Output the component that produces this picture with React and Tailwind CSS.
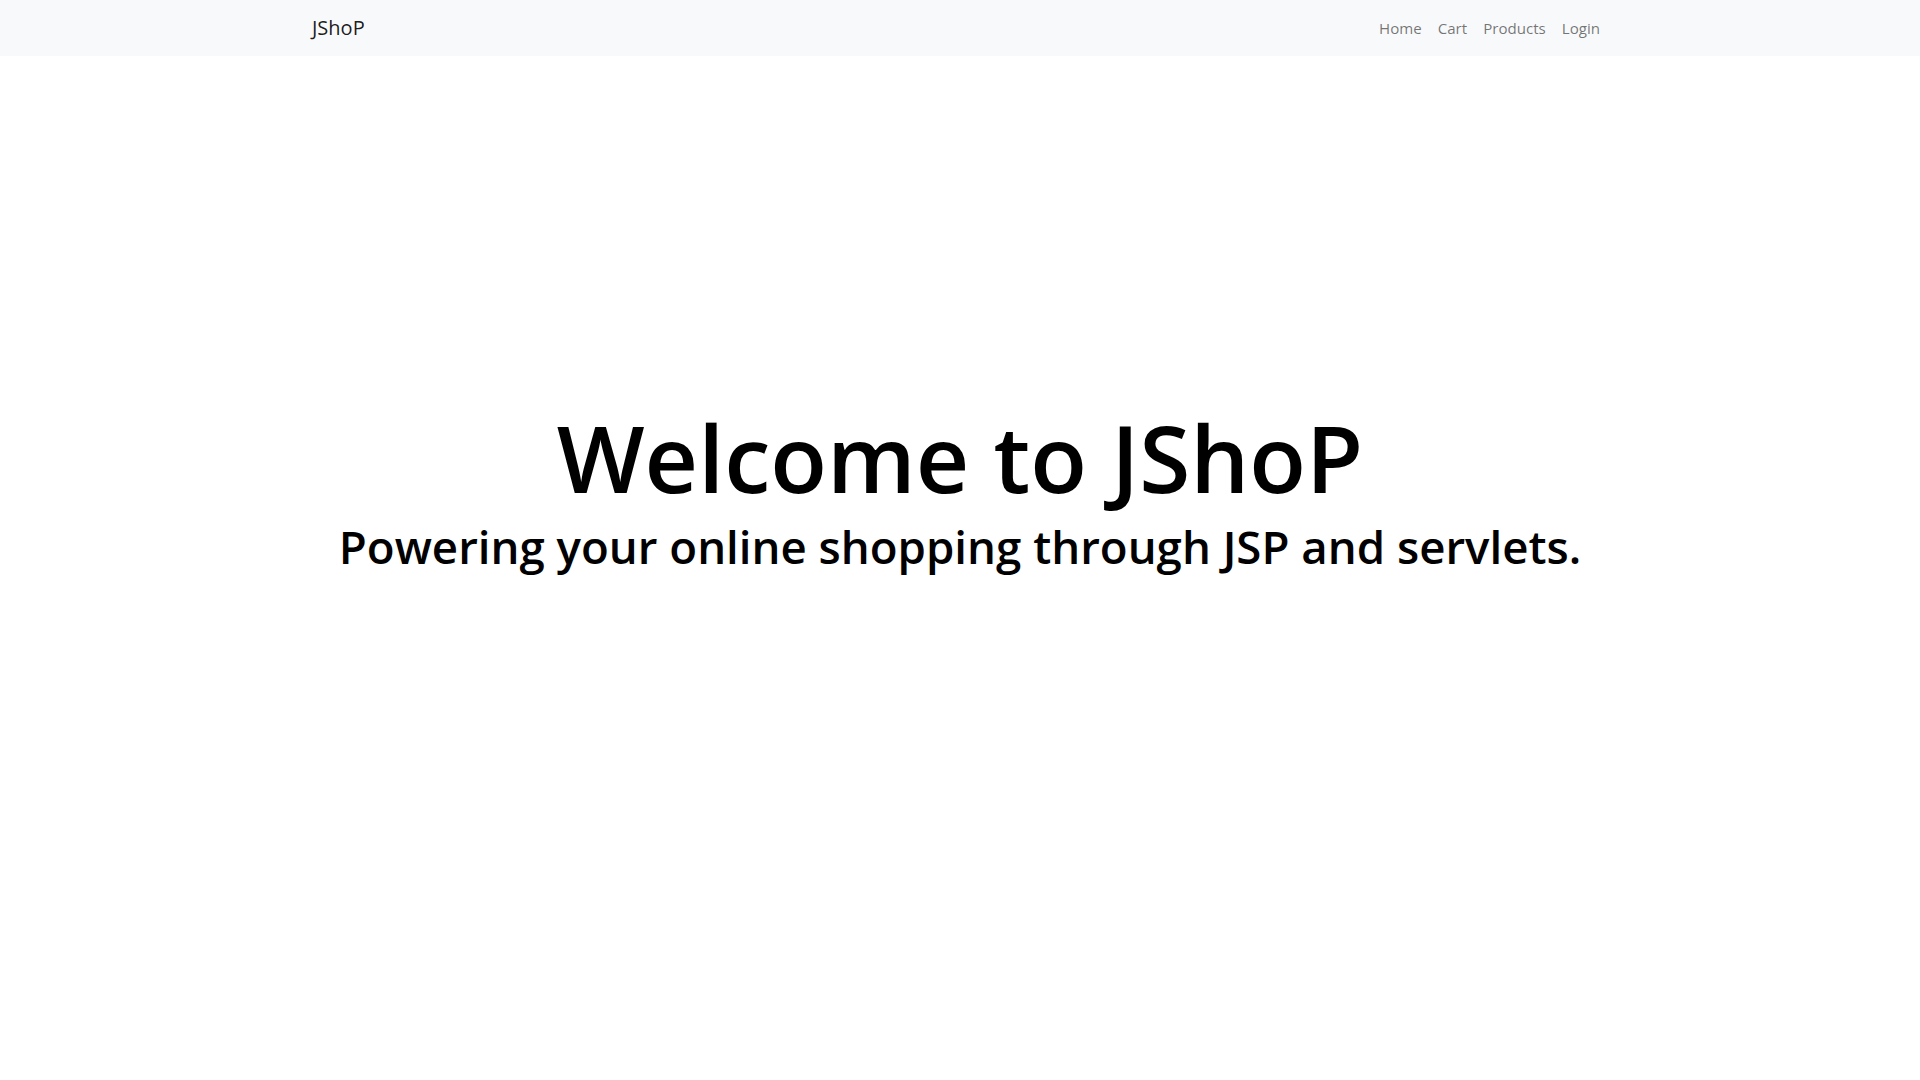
export default function App() {
  const links = ['Home', 'Cart', 'Products', 'Login'];
  return (
    <div className="min-h-screen bg-white font-['Open_Sans','Noto_Sans',sans-serif] text-black">
      <nav className="bg-[#f8f9fa] py-2">
        <div className="mx-auto flex w-[1320px] items-center justify-between px-3">
          <a className="py-[5px] text-[20px] leading-[30px] text-black/90" href="#">JShoP</a>
          <ul className="flex">
            {links.map(link => (
              <li key={link}>
                <a className="block px-2 py-2 text-[15.1px] leading-6 text-black/55" href="#">{link}</a>
              </li>
            ))}
          </ul>
        </div>
      </nav>

      <main className="flex flex-col items-center pt-[346px] text-center">
        <h1 className="text-[93px] font-semibold leading-[1.2]">Welcome to JShoP</h1>
        <h2 className="mt-[5px] text-[45.6px] font-semibold leading-[1.2]">Powering your online shopping through JSP and servlets.</h2>
      </main>
    </div>
  );
}
